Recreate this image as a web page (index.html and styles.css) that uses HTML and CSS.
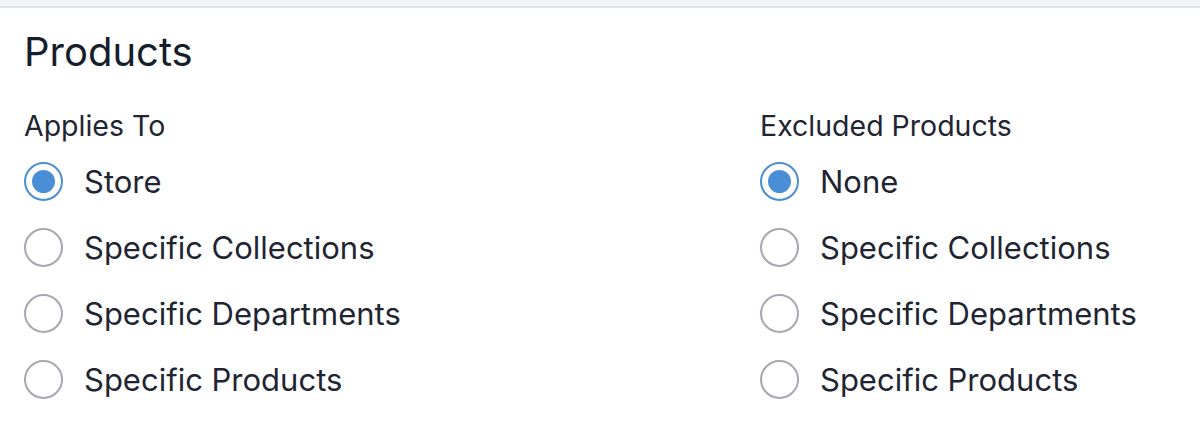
FILE: index.html
```html
<!DOCTYPE html>
<html lang="en">
<head>
  <meta charset="UTF-8">
  <meta name="viewport" content="width=device-width, initial-scale=1.0">
  <title>Products</title>
  <link rel="stylesheet" href="styles.css">
</head>
<body>

<div class="top-bar"></div>

<section class="panel">
  <h2 class="panel-title">Products</h2>

  <div class="columns">
    <fieldset class="option-group">
      <legend class="group-label">Applies To</legend>
      <label class="option"><input type="radio" name="applies" checked><span class="radio"></span>Store</label>
      <label class="option"><input type="radio" name="applies"><span class="radio"></span>Specific Collections</label>
      <label class="option"><input type="radio" name="applies"><span class="radio"></span>Specific Departments</label>
      <label class="option"><input type="radio" name="applies"><span class="radio"></span>Specific Products</label>
    </fieldset>

    <fieldset class="option-group">
      <legend class="group-label">Excluded Products</legend>
      <label class="option"><input type="radio" name="excluded" checked><span class="radio"></span>None</label>
      <label class="option"><input type="radio" name="excluded"><span class="radio"></span>Specific Collections</label>
      <label class="option"><input type="radio" name="excluded"><span class="radio"></span>Specific Departments</label>
      <label class="option"><input type="radio" name="excluded"><span class="radio"></span>Specific Products</label>
    </fieldset>
  </div>
</section>

</body>
</html>
```

FILE: styles.css
```css
body {
  margin: 0;
  font-family: Inter, "Noto Sans", sans-serif;
  color: #1a202c;
  background: #fff;
}
.top-bar {
  height: 6px;
  background: #f3f4f6;
  border-bottom: 2px solid #e3e4e8;
}
.panel {
  padding: 20px 24px 0;
}
.panel-title {
  margin: 0;
  font-size: 40px;
  font-weight: 400;
  line-height: 48px;
  color: #161d2b;
}
.columns {
  display: grid;
  grid-template-columns: 736px 1fr;
  margin-top: 32px;
}
.option-group {
  border: 0;
  margin: 0;
  padding: 0;
}
.group-label {
  padding: 0;
  font-size: 28.5px;
  line-height: 36px;
  color: #1f2533;
}
.option {
  display: flex;
  align-items: center;
  gap: 21px;
  height: 66px;
  font-size: 31px;
  color: #1f2533;
  cursor: pointer;
}
.option:first-of-type {
  margin-top: 4px;
}
.option input {
  display: none;
}
.radio {
  box-sizing: border-box;
  width: 39px;
  height: 39px;
  border: 2px solid #a5a8b1;
  border-radius: 50%;
  display: flex;
  align-items: center;
  justify-content: center;
}
.option input:checked + .radio {
  border-color: #4a8fd5;
}
.option input:checked + .radio::after {
  content: '';
  width: 23px;
  height: 23px;
  border-radius: 50%;
  background: #4a8fd5;
}
```
